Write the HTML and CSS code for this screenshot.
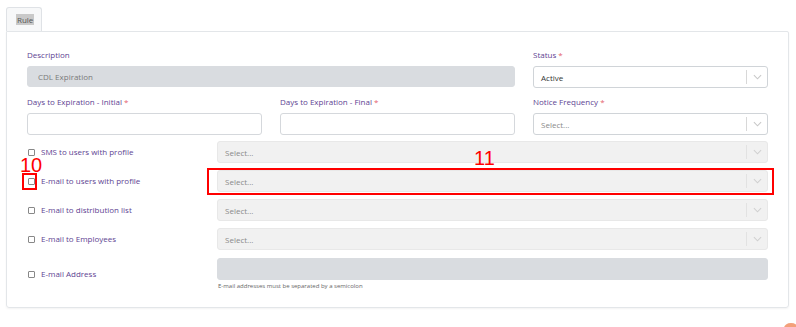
FILE: index.html
```html
<!DOCTYPE html>
<html lang="en">
<head>
  <meta charset="UTF-8" />
  <title>Rule</title>
  <link rel="stylesheet" href="styles.css">
</head>
<body>
  <div class="page">
    <div class="tabs">
      <div class="tab"><span class="tab-label">Rule</span></div>
    </div>

    <div class="panel">
      <div class="grid">
        <div class="field span2">
          <label>Description</label>
          <div class="input grey">CDL Expiration</div>
        </div>
        <div class="field">
          <label>Status <b>*</b></label>
          <div class="select">
            <span>Active</span>
            <span class="sel-ind"><svg viewBox="0 0 10 6" width="9" height="6"><path d="M1 1l4 4 4-4" fill="none" stroke="#c8c8c8" stroke-width="1.2"/></svg></span>
          </div>
        </div>

        <div class="field">
          <label>Days to Expiration - Initial <b>*</b></label>
          <div class="input"></div>
        </div>
        <div class="field">
          <label>Days to Expiration - Final <b>*</b></label>
          <div class="input"></div>
        </div>
        <div class="field">
          <label>Notice Frequency <b>*</b></label>
          <div class="select">
            <span class="ph">Select...</span>
            <span class="sel-ind"><svg viewBox="0 0 10 6" width="9" height="6"><path d="M1 1l4 4 4-4" fill="none" stroke="#c8c8c8" stroke-width="1.2"/></svg></span>
          </div>
        </div>
      </div>

      <div class="checks">
        <div class="check-row">
          <label class="check"><span class="box"></span>SMS to users with profile</label>
          <div class="select disabled">
            <span class="ph">Select...</span>
            <span class="sel-ind"><svg viewBox="0 0 10 6" width="9" height="6"><path d="M1 1l4 4 4-4" fill="none" stroke="#d0d0d0" stroke-width="1.2"/></svg></span>
          </div>
        </div>
        <div class="check-row">
          <label class="check"><span class="box"></span>E-mail to users with profile</label>
          <div class="select disabled">
            <span class="ph">Select...</span>
            <span class="sel-ind"><svg viewBox="0 0 10 6" width="9" height="6"><path d="M1 1l4 4 4-4" fill="none" stroke="#d0d0d0" stroke-width="1.2"/></svg></span>
          </div>
        </div>
        <div class="check-row">
          <label class="check"><span class="box"></span>E-mail to distribution list</label>
          <div class="select disabled">
            <span class="ph">Select...</span>
            <span class="sel-ind"><svg viewBox="0 0 10 6" width="9" height="6"><path d="M1 1l4 4 4-4" fill="none" stroke="#d0d0d0" stroke-width="1.2"/></svg></span>
          </div>
        </div>
        <div class="check-row">
          <label class="check"><span class="box"></span>E-mail to Employees</label>
          <div class="select disabled">
            <span class="ph">Select...</span>
            <span class="sel-ind"><svg viewBox="0 0 10 6" width="9" height="6"><path d="M1 1l4 4 4-4" fill="none" stroke="#d0d0d0" stroke-width="1.2"/></svg></span>
          </div>
        </div>
        <div class="check-row addr">
          <label class="check"><span class="box"></span>E-mail Address</label>
          <div>
            <div class="input grey"></div>
            <p class="help">E-mail addresses must be separated by a semicolon</p>
          </div>
        </div>
      </div>
    </div>

    <!-- annotation overlays -->
    <span class="note n10">10</span>
    <span class="mark m10"></span>
    <span class="note n11">11</span>
    <span class="mark m11"></span>
    <span class="corner"></span>
  </div>
</body>
</html>
```

FILE: styles.css
```css
* { box-sizing: border-box; margin: 0; padding: 0; }
html, body { overflow: hidden; }
body {
  background: #fff;
  font-family: "Open Sans", "Liberation Sans", sans-serif;
  font-size: 8px;
  color: #555;
}

.page {
  position: relative;
  width: 796px; height: 327px;
  padding: 7px 7px 0 6px;
}

.tabs { display: flex; height: 24px; }
.tab {
  width: 36px;
  border: 1px solid #dfe2e6;
  border-bottom: none;
  border-radius: 3px 3px 0 0;
  background: #f7f8f9;
  padding: 6px 0 0 9px;
}
.tab-label {
  background: #c9c9c9;
  color: #555;
  font-size: 8px;
  line-height: 11px;
  display: inline-block;
  padding: 0 1px;
}

.panel {
  border: 1px solid #e3e6e9;
  border-radius: 0 2px 3px 3px;
  box-shadow: 0 1px 2px rgba(0,0,0,0.05);
  height: 277px;
  padding: 17px 20px 0 20px;
}

.grid {
  display: grid;
  grid-template-columns: 235px 235px 235px;
  column-gap: 18px;
  row-gap: 8px;
}
.span2 { grid-column: span 2; }

label {
  display: block;
  color: #5e4392;
  font-size: 8px;
  line-height: 12px;
  margin-bottom: 5px;
}
label b { color: #e4606d; font-weight: normal; }

.input {
  height: 22px;
  border: 1px solid #d5d8dc;
  border-radius: 3px;
  background: #fff;
  padding: 0 10px;
  line-height: 20px;
  color: #7a7a7a;
}
.input.grey { background: #d9dce0; border-color: #d9dce0; }
.span2 .input { width: 488px; height: 21px; }

.select {
  height: 22px;
  border: 1px solid #d0d4d8;
  border-radius: 3px;
  background: #fff;
  display: flex;
  align-items: center;
  padding-left: 7px;
  color: #333;
}
.select > span:first-child { flex: 1; }
.select .ph { color: #8a8a8a; }
.sel-ind {
  display: flex; align-items: center; justify-content: center;
  width: 21px; height: 14px;
  border-left: 1px solid #d8d8d8;
}
.select.disabled { background: #f1f1f1; border-color: #e8e8e8; }
.select.disabled .sel-ind { border-left-color: #e2e2e2; }

.checks {
  margin-top: 6px;
  display: flex;
  flex-direction: column;
  gap: 7px;
}
.check-row {
  display: grid;
  grid-template-columns: 190px 551px;
  align-items: center;
}
.check {
  display: flex; align-items: center;
  margin: 0;
  padding-left: 1px;
  gap: 6px;
}
.box {
  width: 7px; height: 7px;
  border: 1px solid #888;
  border-radius: 1px;
  background: #fff;
}
.addr { align-items: start; margin-top: 1px; }
.addr .check { margin-top: 10px; }
.help {
  font-size: 6px;
  color: #666;
  margin-top: 2px;
  padding-left: 1px;
}

/* annotations */
.note {
  position: absolute;
  color: #f00;
  font-family: "Liberation Sans", sans-serif;
  font-size: 20px;
  line-height: 20px;
}
.n10 { left: 20px; top: 155px; }
.n11 { left: 474px; top: 148px; }
.mark { position: absolute; border: 2px solid #f00; }
.m10 { left: 22px; top: 173px; width: 15px; height: 17px; }
.m11 { left: 207px; top: 168px; width: 567px; height: 27px; }
.corner {
  position: absolute;
  left: 784px; top: 323px;
  width: 14px; height: 10px;
  border-radius: 50%;
  background: #f3a07a;
}
```
